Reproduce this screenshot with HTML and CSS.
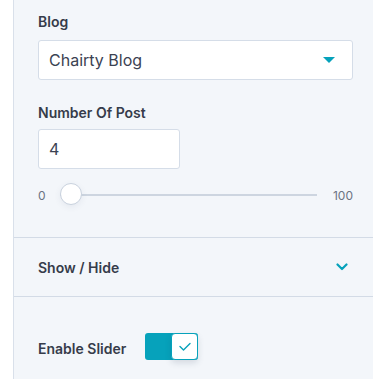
FILE: index.html
```html
<!DOCTYPE html>
<html lang="en">
<head>
    <meta charset="UTF-8">
    <meta name="viewport" content="width=device-width, initial-scale=1.0">
    <title>Blog Settings</title>
    <link rel="stylesheet" href="styles.css">
</head>
<body>
    <div class="gutter"></div>

    <div class="panel">
        <div class="section">
            <label class="field-label">Blog</label>
            <div class="select">
                <span>Chairty Blog</span>
                <span class="caret"></span>
            </div>

            <label class="field-label second">Number Of Post</label>
            <div class="number-input">4</div>

            <div class="range">
                <span class="range-min">0</span>
                <div class="track">
                    <span class="thumb"></span>
                </div>
                <span class="range-max">100</span>
            </div>
        </div>

        <div class="accordion">
            <span>Show / Hide</span>
            <svg class="chevron" width="12" height="8" viewBox="0 0 12 8">
                <path d="M1.5 1.5 L6 6 L10.5 1.5" fill="none" stroke="#06a2bb" stroke-width="2.2" stroke-linecap="round" stroke-linejoin="round"/>
            </svg>
        </div>

        <div class="section toggles">
            <div class="toggle-row">
                <span class="toggle-label">Enable Slider</span>
                <div class="toggle">
                    <div class="knob">
                        <svg width="12" height="9" viewBox="0 0 12 9">
                            <path d="M1 4.5 L4.5 8 L11 1.5" fill="none" stroke="#06a2bb" stroke-width="1.4" stroke-linecap="round" stroke-linejoin="round"/>
                        </svg>
                    </div>
                </div>
            </div>
        </div>
    </div>
</body>
</html>
```

FILE: styles.css
```css
body {
    margin: 0;
    display: flex;
    height: 100vh;
    font-family: Inter, "Noto Sans", sans-serif;
    color: #353c4a;
    background: #ffffff;
}

.gutter {
    width: 13px;
    flex-shrink: 0;
    background: #ffffff;
}

.panel {
    flex: 1;
    background: #f3f6fa;
    border-left: 1px solid #d9e0ea;
}

.section {
    padding: 12px 20px 31px 24px;
}

.field-label {
    display: block;
    font-size: 14px;
    line-height: 20px;
    font-weight: 600;
    color: #363c4a;
}

.field-label.second {
    margin-top: 23px;
}

.select {
    margin-top: 8px;
    height: 40px;
    box-sizing: border-box;
    background: #ffffff;
    border: 1px solid #d5dde8;
    border-radius: 3px;
    display: flex;
    align-items: center;
    justify-content: space-between;
    padding: 0 17px 0 10px;
    font-size: 16px;
    color: #3b4252;
}

.caret {
    width: 0;
    height: 0;
    border-left: 6px solid transparent;
    border-right: 6px solid transparent;
    border-top: 6px solid #06a2bb;
}

.number-input {
    margin-top: 6px;
    width: 142px;
    height: 40px;
    box-sizing: border-box;
    background: #ffffff;
    border: 1px solid #d5dde8;
    border-radius: 3px;
    padding: 0 10px;
    display: flex;
    align-items: center;
    font-size: 16px;
    color: #3b4252;
}

.range {
    margin-top: 15px;
    height: 22px;
    display: flex;
    align-items: center;
    font-size: 12px;
    color: #6b7382;
}

.range-min {
    width: 22px;
}

.track {
    flex: 1;
    height: 2px;
    background: #cdd5e0;
    position: relative;
    margin-right: 16px;
}

.thumb {
    position: absolute;
    left: 0;
    top: -11px;
    width: 22px;
    height: 22px;
    box-sizing: border-box;
    border-radius: 50%;
    background: #ffffff;
    border: 1px solid #c9d2de;
    box-shadow: 0 2px 6px rgba(60, 80, 110, 0.08);
}

.accordion {
    height: 58px;
    border-top: 1px solid #d3dbe6;
    border-bottom: 1px solid #d3dbe6;
    display: flex;
    align-items: center;
    justify-content: space-between;
    padding: 0 25px 0 24px;
    font-size: 14px;
    font-weight: 600;
    color: #363c4a;
}

.toggles {
    padding-top: 36px;
}

.toggle-row {
    display: flex;
    align-items: center;
    gap: 19px;
}

.toggle-label {
    font-size: 14px;
    font-weight: 600;
    color: #363c4a;
    margin-top: 3px;
}

.toggle {
    width: 53px;
    height: 27px;
    background: #06a2bb;
    border-radius: 3px;
    display: flex;
    justify-content: flex-end;
}

.knob {
    width: 27px;
    height: 27px;
    box-sizing: border-box;
    background: #ffffff;
    border: 1px solid #06a2bb;
    border-radius: 4px;
    display: flex;
    align-items: center;
    justify-content: center;
    box-shadow: 0 3px 6px rgba(40, 60, 90, 0.15);
}
```
